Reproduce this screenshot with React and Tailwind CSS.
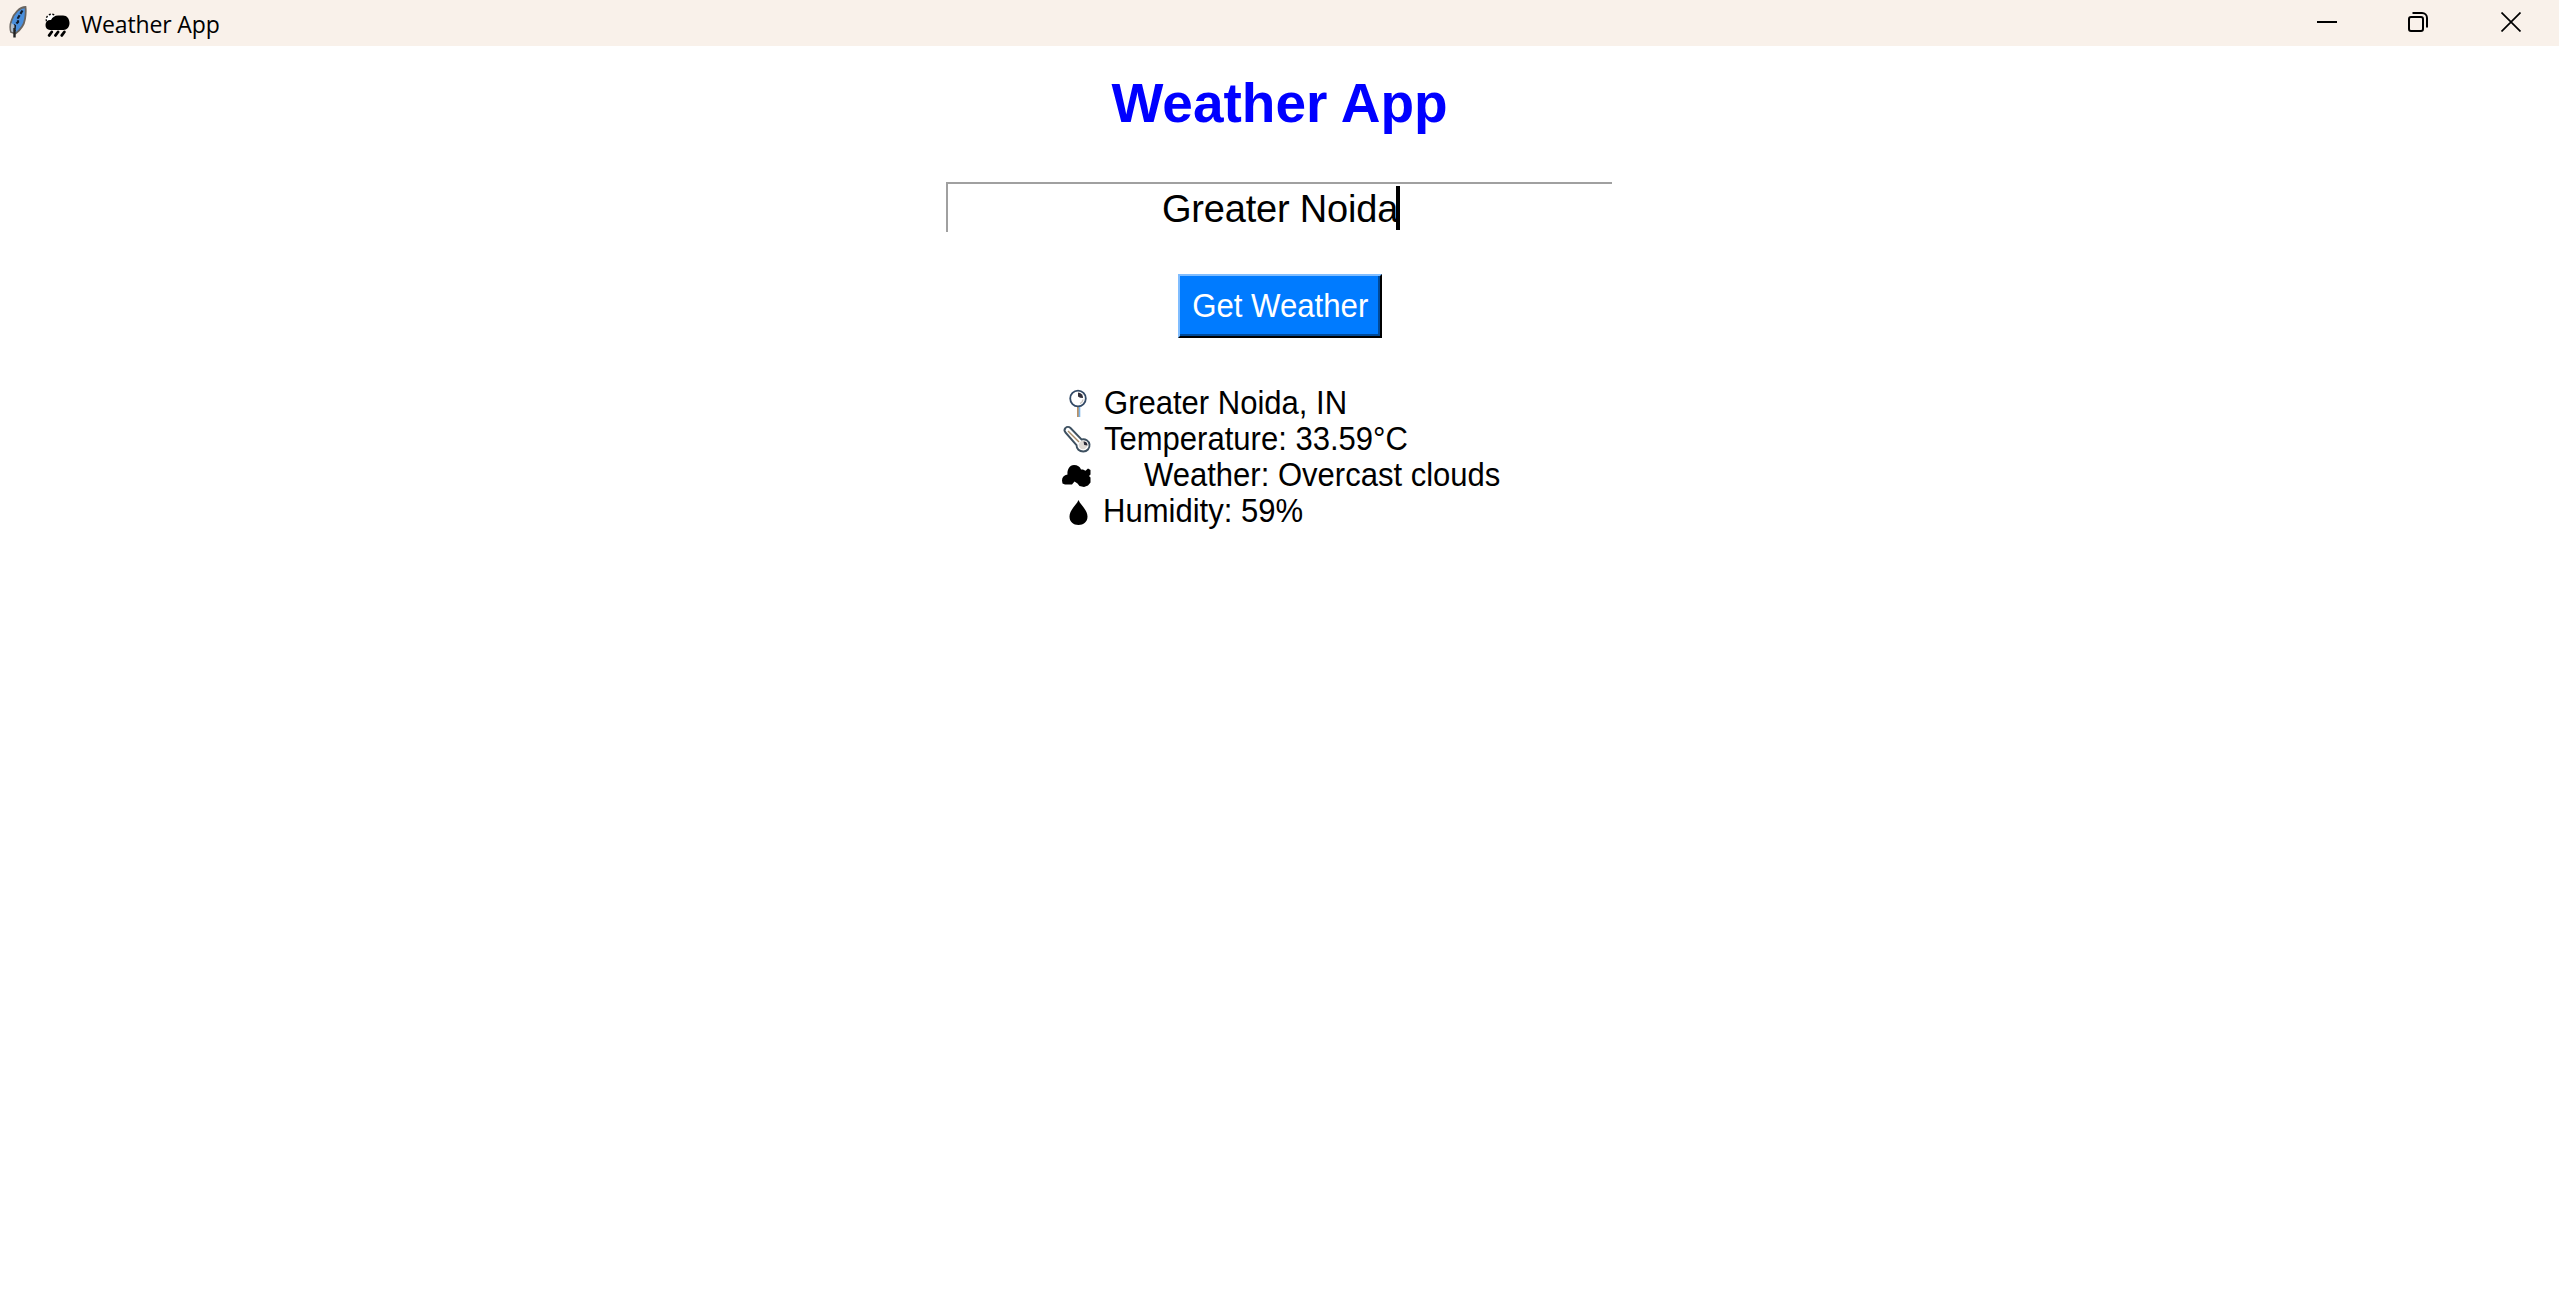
function Feather() {
  return (
    <svg className="block" width="18" height="32" viewBox="0 0 18 32">
      <path d="M16.500 1C11 1 5 7 2.500 14.500c-1.500 4-1.500 8-.5 11.500l4.500 1.500c5.500-4 8.500-8 9.500-14.500.7-4 1-8 .5-12Z" fill="#4a8fdc" stroke="#6a6560" strokeWidth="1.800" />
      <path d="M13.500 4.500 11 8.500 9 12 9 16 6 19 5.500 25" fill="none" stroke="#111c2c" strokeWidth="2.200" strokeDasharray="4 1.500" />
      <path d="M2.500 17c-1 4-.8 7-.2 8.500l2.700 1 .6-7Z" fill="#c6c8ca" opacity=".8" />
      <path d="M5.500 22v9.500" stroke="#222" strokeWidth="2.400" />
    </svg>
  );
}

function RainCloud() {
  return (
    <svg className="block" width="25" height="24" viewBox="0 0 25 24">
      <circle cx="6.500" cy="6.500" r="5.300" fill="#fff" stroke="#000" strokeWidth="1.300" strokeDasharray="2 1.600" />
      <path d="M5 17a5 5 0 0 1-4.500-5C.5 8.500 3 6.500 6 7c1.500-3 4-4.500 7-4.500S17 2.500 18 2.500c4 0 6.500 3.500 6.500 7.500 0 4-2.500 7-6 7Z" />
      <path d="m6.700 19-2.500 3.400M13 19l-2.500 3.400M19.300 19l-2.500 3.400" stroke="#000" strokeWidth="2.800" strokeLinecap="round" />
    </svg>
  );
}

function Pin() {
  return (
    <svg className="block shrink-0" width="30" height="36" viewBox="0 0 30 36">
      <path d="M17 22v11" stroke="#b48654" strokeWidth="1.800" />
      <path d="M18.500 22v11" stroke="#78b4ec" strokeWidth="1.600" />
      <circle cx="17" cy="14.500" r="7.800" fill="#fff" stroke="#334a66" strokeWidth="1.800" />
      <path d="M17 8.500a5 5 0 0 1 5 5.500l-3-.3-2-1.200Z" fill="#33303a" />
      <path d="M19 19.500a5 5 0 0 0 3-4" fill="none" stroke="#c9c4c0" strokeWidth="1.500" />
    </svg>
  );
}

function Thermometer() {
  return (
    <svg className="block shrink-0" width="30" height="36" viewBox="0 0 30 36">
      <path d="M4.500 8c1.300-1.500 3.500-1.500 5 0L20.500 19.500c4-1 7.500 1.500 8 5 .5 4-2.500 7-6.200 7-4 0-6.800-2.500-6.800-6.500L4.500 12.500c-1.200-1.300-1.200-3.200 0-4.500Z" fill="#fff" stroke="#3d5060" strokeWidth="1.900" />
      <path d="m7 11 11 11" stroke="#a58a68" strokeWidth="1.400" />
      <circle cx="22" cy="25" r="4.300" fill="#dedad5" />
      <path d="M22.500 21.500a4 4 0 0 1 4 4l-3.300-.5Z" fill="#2c2c38" />
    </svg>
  );
}

function Cloud() {
  return (
    <svg className="block shrink-0" width="30" height="36" viewBox="0 0 30 36">
      <path d="M1 24.500C1 21 3 19 6.500 18.500 6 14 8.500 9 13 9c3.500 0 6 1.500 7 4.500L22 13.500l2.500 1.200L27 12.500 29.500 14v4.500l-1.500 1.500 1.500 1.500v5L27 29.500l-4 1.500-4.500-1-2-2.500-3-2L11 28.500H4L1.500 27.500Z" />
    </svg>
  );
}

function Droplet() {
  return (
    <svg className="block shrink-0" width="30" height="36" viewBox="0 0 30 36">
      <path d="M17.500 8c2 5 9 10 9 16.500 0 5.500-4 8.500-9 8.500s-9-3-9-8.500C8.500 18 15.500 13 17.500 8Z" />
    </svg>
  );
}

const rows = [
  { Icon: Pin, text: "Greater Noida, IN", pad: "pl-[13px]" },
  { Icon: Thermometer, text: "Temperature: 33.59°C", pad: "pl-[13px]" },
  { Icon: Cloud, text: "Weather: Overcast clouds", pad: "pl-[53px]" },
  { Icon: Droplet, text: "Humidity: 59%", pad: "pl-[12px]" },
];

export default function App() {
  return (
    <div className="flex h-[1293px] w-[2559px] flex-col overflow-hidden bg-white font-['Liberation_Sans',Arial,sans-serif] text-black">
      <header className="flex h-[46px] shrink-0 items-start justify-between bg-[#f9f1ea]">
        <div className="flex items-start">
          <div className="pt-[6px] pl-[9px]"><Feather /></div>
          <div className="pt-[13px] pl-[18px]"><RainCloud /></div>
          <span className="pt-[8px] pl-[11px] font-['Open_Sans','Noto_Sans',sans-serif] text-[23px] leading-[32px] tracking-[-0.15px] whitespace-nowrap">Weather App</span>
        </div>
        <div className="flex items-start pt-[12px] pr-[38px]">
          <svg className="block" width="20" height="20" viewBox="0 0 20 20"><path d="M0 10h20" stroke="#000" strokeWidth="2" /></svg>
          <svg className="ml-[71px] block" width="20" height="20" viewBox="0 0 20 20" fill="none" stroke="#000" strokeWidth="2">
            <rect x="1" y="5" width="14" height="14" rx="2" />
            <path d="M4.500 1H14a5 5 0 0 1 5 5v9.500" />
          </svg>
          <svg className="ml-[73px] block" width="20" height="20" viewBox="0 0 20 20"><path d="m.5.5 19 19M19.500.5l-19 19" stroke="#000" strokeWidth="1.700" /></svg>
        </div>
      </header>
      <main className="flex w-[2558px] flex-col items-center">
        <h1 className="mt-[25px] ml-px text-[55px] leading-[64px] font-bold whitespace-nowrap text-[#0000ff]">Weather App</h1>
        <div className="mt-[47px] flex h-[50px] w-[666px] items-start border-t-2 border-l-2 border-[#a0a0a0] pl-[214px] text-[38px] leading-[44px]">
          <span className="w-[234px] pt-[3px] tracking-[-0.2px] whitespace-nowrap">Greater Noida</span>
          <span className="mt-[2px] h-[44px] w-[4px] bg-black" />
        </div>
        <button className="mt-[42px] ml-[2px] h-[64px] w-[204px] border-2 border-t-[#80bdff] border-r-black border-b-black border-l-[#80bdff] bg-[#007bff] text-white">
          <span className="flex h-full w-full items-center justify-center border-r-2 border-b-2 border-[#004a99] pt-[2px] pl-[2px] text-[33px] leading-[36px] whitespace-nowrap">
            <span className="inline-block scale-x-[0.945]">Get Weather</span>
          </span>
        </button>
        <section className="mt-[46px] w-[436px] text-[33px] leading-[36px]">
          {rows.map(({ Icon, text, pad }) => (
            <div key={text} className="flex h-[36px]">
              <Icon />
              <div className={pad}>
                <span className="mt-px inline-block origin-left scale-x-[0.94] whitespace-nowrap">{text}</span>
              </div>
            </div>
          ))}
        </section>
      </main>
    </div>
  );
}
